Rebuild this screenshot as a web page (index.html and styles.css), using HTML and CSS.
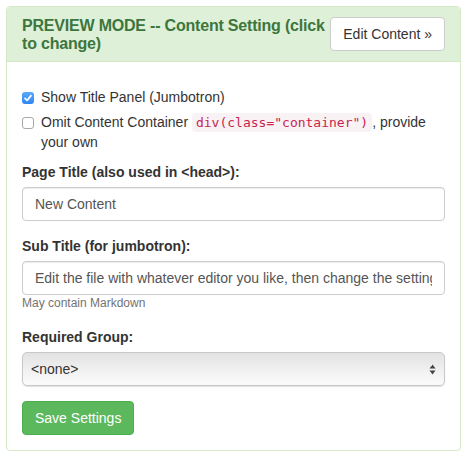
FILE: index.html
```html
<!DOCTYPE html>
<html>
<head>
<meta charset="utf-8">
<link rel="stylesheet" href="styles.css">
</head>
<body>
<div class="panel">
  <div class="panel-heading">
    <button class="btn btn-default pull-right">Edit Content &raquo;</button>
    <h3 class="panel-title">PREVIEW MODE -- Content Setting (click to change)</h3>
  </div>
  <div class="panel-body">
    <form class="form">
      <div class="checkbox first">
        <label><span class="cb cb-on"><svg width="12" height="12" viewBox="0 0 12 12"><path d="M3 6.3 L5.1 8.4 L9 3.6" fill="none" stroke="#fff" stroke-width="1.7" stroke-linecap="round" stroke-linejoin="round"/></svg></span>Show Title Panel (Jumbotron)</label>
      </div>
      <div class="checkbox second">
        <label><span class="cb cb-off"></span><span>Omit Content Container</span> <code>div(class="container")</code><span>, provide</span><br><span>your own</span></label>
      </div>
      <div class="form-group">
        <label class="control-label">Page Title (also used in &lt;head&gt;):</label>
        <input class="form-control" type="text" value="New Content">
      </div>
      <div class="form-group help-group">
        <label class="control-label">Sub Title (for jumbotron):</label>
        <input class="form-control" type="text" value="Edit the file with whatever editor you like, then change the settings">
        <p class="help-block">May contain Markdown</p>
      </div>
      <div class="form-group">
        <label class="control-label">Required Group:</label>
        <div class="select-wrap">
          <select class="form-control select"><option>&lt;none&gt;</option></select>
          <svg class="select-arrows" width="7" height="11" viewBox="0 0 7 11"><path d="M3.5 0.5 L6.5 4.5 L0.5 4.5 Z" fill="#444"/><path d="M3.5 10.5 L6.5 6.5 L0.5 6.5 Z" fill="#444"/></svg>
        </div>
      </div>
      <button type="button" class="btn btn-success">Save Settings</button>
    </form>
  </div>
</div>
</body>
</html>
```
FILE: styles.css
```css
* { box-sizing: border-box; }
html, body { margin: 0; padding: 0; background: #fff; }
body {
  font-family: "Liberation Sans", Arial, Helvetica, sans-serif;
  font-size: 14px;
  line-height: 20px;
  color: #333;
}
.panel {
  margin: 6px 8px 0 6px;
  border: 1px solid #d6e9c6;
  border-radius: 4px;
  background: #fff;
}
.panel-heading {
  background: #dff0d8;
  color: #3c763d;
  border-bottom: 1px solid #d6e9c6;
  border-radius: 3px 3px 0 0;
  padding: 10px 15px;
  height: 55px;
}
.panel-title {
  margin: 0;
  font-size: 16px;
  line-height: 17.6px;
  font-weight: bold;
  letter-spacing: -0.2px;
  color: #3c763d;
}
.pull-right { float: right; }
.btn {
  display: inline-block;
  height: 34px;
  padding: 6px 12px;
  font-family: inherit;
  font-size: 14px;
  line-height: 20px;
  border: 1px solid transparent;
  border-radius: 4px;
  cursor: pointer;
}
.btn-default {
  background: #fff;
  color: #333;
  border-color: #ccc;
}
.btn-success {
  background: #5cb85c;
  border-color: #4cae4c;
  color: #fff;
}
.panel-body { padding: 15px; }
.form { margin: 0; }
.checkbox { margin: 10px 0; }
.checkbox.second { margin-top: -5px; }
.checkbox label {
  display: block;
  position: relative;
  padding-left: 19px;
  font-weight: normal;
}
.cb {
  position: absolute;
  left: 0;
  top: 5px;
  width: 12px;
  height: 12px;
  border-radius: 3px;
}
.cb svg { display: block; }
.cb-on {
  background: linear-gradient(#5aa9fb, #2f86f4);
  border: none;
}
.cb-off {
  background: #fff;
  border: 1px solid #a8a8a8;
}
code {
  font-family: "DejaVu Sans Mono", Menlo, monospace;
  font-size: 13px;
  line-height: 16px;
  padding: 2px 4px;
  color: #c7254e;
  background: #f9f2f4;
  border-radius: 4px;
}
.form-group { margin-bottom: 15px; }
.control-label {
  display: block;
  margin-bottom: 5px;
  font-weight: bold;
}
.form-control {
  display: block;
  width: 100%;
  height: 34px;
  padding: 6px 12px;
  font-family: inherit;
  font-size: 14px;
  line-height: 20px;
  color: #555;
  background: #fff;
  border: 1px solid #ccc;
  border-radius: 4px;
  box-shadow: inset 0 1px 1px rgba(0,0,0,.075);
  outline: none;
}
.help-group { margin-bottom: 15px; }
.help-block {
  margin: 0 0 1px;
  font-size: 12px;
  line-height: 17px;
  color: #737373;
}
.select-wrap { position: relative; }
.select {
  -webkit-appearance: none;
  appearance: none;
  padding: 6px 8px;
  color: #333;
  background: linear-gradient(#e2e2e2, #f2f2f2 60%, #fbfbfb);
  border: 1px solid #c8c8c8;
  border-radius: 5px;
  box-shadow: 0 1px 1px rgba(0,0,0,.12);
}
.select-arrows {
  position: absolute;
  right: 9px;
  top: 12px;
}
```
